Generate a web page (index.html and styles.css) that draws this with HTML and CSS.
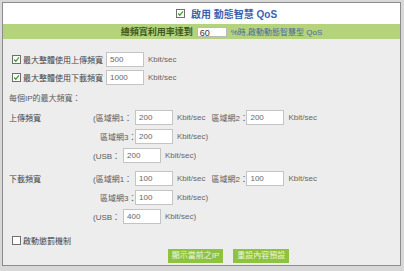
FILE: index.html
```html
<!DOCTYPE html>
<html lang="zh-Hant">
<head>
  <meta charset="UTF-8" />
  <title>動態智慧 QoS</title>
  <link rel="stylesheet" href="styles.css">
</head>
<body>
  <div class="panel">
    <div class="title">
      <span class="box"><svg viewBox="0 0 9 9"><path d="M1.5 4.5 L3.6 6.8 L7.6 1.8" /></svg></span>
      <span>啟用 動態智慧 QoS</span>
    </div>

    <div class="band">
      總頻寬利用率達到 <span class="band-input">60</span> <span class="band-note">%時,啟動動態智慧型 QoS</span>
    </div>

    <div class="body">
      <div class="row">
        <span class="chk"><span class="box"><svg viewBox="0 0 9 9"><path d="M1.5 4.5 L3.6 6.8 L7.6 1.8" /></svg></span>最大整體使用上傳頻寬：</span>
        <span class="num">500</span>
        <span class="unit">Kbit/sec</span>
      </div>
      <div class="row">
        <span class="chk"><span class="box"><svg viewBox="0 0 9 9"><path d="M1.5 4.5 L3.6 6.8 L7.6 1.8" /></svg></span>最大整體使用下載頻寬：</span>
        <span class="num">1000</span>
        <span class="unit">Kbit/sec</span>
      </div>

      <div class="row heading">每個IP的最大頻寬：</div>

      <div class="ipgrid">
        <span class="dir">上傳頻寬</span>
        <div class="line">
          <span class="lan">(區域網1：</span><span class="num">200</span><span class="unit">Kbit/sec</span>
          <span class="lan2">區域網2：</span><span class="num">200</span><span class="unit">Kbit/sec</span>
        </div>
        <span></span>
        <div class="line">
          <span class="lan pad">區域網3：</span><span class="num">200</span><span class="unit">Kbit/sec)</span>
        </div>
        <span></span>
        <div class="line">
          <span class="usb">(USB：</span><span class="num">200</span><span class="unit">Kbit/sec)</span>
        </div>
      </div>

      <div class="ipgrid down">
        <span class="dir">下載頻寬</span>
        <div class="line">
          <span class="lan">(區域網1：</span><span class="num">100</span><span class="unit">Kbit/sec</span>
          <span class="lan2">區域網2：</span><span class="num">100</span><span class="unit">Kbit/sec</span>
        </div>
        <span></span>
        <div class="line">
          <span class="lan pad">區域網3：</span><span class="num">100</span><span class="unit">Kbit/sec)</span>
        </div>
        <span></span>
        <div class="line">
          <span class="usb">(USB：</span><span class="num">400</span><span class="unit">Kbit/sec)</span>
        </div>
      </div>

      <div class="row penalty">
        <span class="chk"><span class="box empty"></span>啟動懲罰機制</span>
      </div>

      <div class="buttons">
        <span class="btn">顯示當前之IP</span>
        <span class="btn">重設內容預設</span>
      </div>
    </div>
  </div>
</body>
</html>
```

FILE: styles.css
```css
body {
  margin: 0;
  background-color: #d8d8d8;
  font-family: "Liberation Sans", "Noto Sans CJK TC", sans-serif;
  font-size: 8px;
  color: #5a5a5a;
  height: 271px;
  overflow: hidden;
  white-space: nowrap;
}

.panel {
  margin: 2px 3px 0 2px;
  border: 1px solid #8c8c8c;
  background-color: #eeeded;
  height: 264px;
  box-sizing: border-box;
}

.title {
  background-color: #fff;
  height: 21px;
  display: flex;
  align-items: center;
  justify-content: center;
  padding-left: 50px;
  color: #3c62b0;
  font-size: 10px;
  font-weight: bold;
}

.title .box {
  margin-right: 6px;
}

.box {
  display: inline-block;
  width: 9px;
  height: 9px;
  box-sizing: border-box;
  border: 1px solid #6f6f6f;
  background: #fff;
  flex: none;
}

.box svg {
  display: block;
  width: 7px;
  height: 7px;
  fill: none;
  stroke: #3a9a2a;
  stroke-width: 1.6;
}

.band {
  background-color: #b5d27c;
  height: 15px;
  display: flex;
  align-items: center;
  justify-content: center;
  padding-left: 40px;
  color: #3b5a1c;
  font-weight: bold;
  font-size: 9px;
}

.band-input {
  display: inline-block;
  width: 30px;
  height: 10px;
  line-height: 10px;
  margin: 0 4px;
  padding: 0 2px;
  box-sizing: border-box;
  border: 1px solid #bbb;
  background: #fff;
  font-weight: normal;
  color: #333;
}

.band-note {
  font-weight: normal;
  font-size: 8px;
  color: #4a6a9a;
}

.body {
  padding: 11px 0 0 6px;
}

.row {
  display: flex;
  align-items: center;
  height: 18px;
}

.row.heading {
  height: 20px;
  margin-top: 1px;
}

.chk {
  display: flex;
  align-items: center;
  width: 97px;
  color: #444;
}

.chk .box {
  margin: 0 2px 0 3px;
}

.num {
  display: inline-block;
  width: 38px;
  height: 15px;
  line-height: 13px;
  box-sizing: border-box;
  padding: 0 3px;
  border: 1px solid #c4c4c4;
  background: #fff;
  color: #666;
  flex: none;
}

.unit {
  margin-left: 4px;
  color: #666;
}

.ipgrid {
  display: grid;
  grid-template-columns: 84px 1fr;
  grid-auto-rows: 19px;
  margin-top: 1px;
  align-items: center;
}

.ipgrid.down {
  margin-top: 4px;
}

.dir {
  color: #444;
}

.line {
  display: flex;
  align-items: center;
}

.lan {
  width: 42px;
}

.lan.pad {
  padding-left: 7px;
  width: 35px;
}

.lan2 {
  margin-left: 6px;
  width: 35px;
}

.usb {
  width: 30px;
}

.penalty {
  margin-top: 5px;
}

.buttons {
  display: flex;
  justify-content: center;
  gap: 10px;
  padding-left: 48px;
}

.btn {
  display: inline-block;
  background-color: #8ec23f;
  color: #eef7de;
  height: 14px;
  line-height: 14px;
  padding: 0 4px;
}
```
